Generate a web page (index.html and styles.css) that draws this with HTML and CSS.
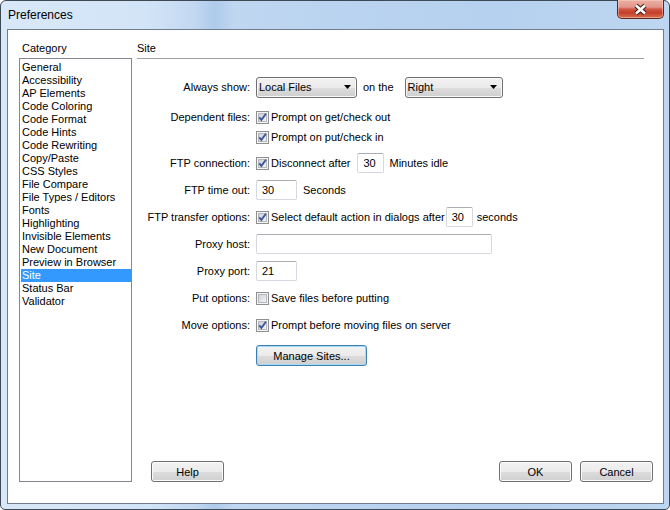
FILE: index.html
```html
<!DOCTYPE html>
<html>
<head>
<meta charset="utf-8">
<title>Preferences</title>
<link rel="stylesheet" href="styles.css">
</head>
<body>
<svg class="defs" width="0" height="0" aria-hidden="true">
  <defs>
    <linearGradient id="cbg" x1="0" y1="0" x2="1" y2="1">
      <stop offset="0" stop-color="#c9ced4"/>
      <stop offset="1" stop-color="#f7f7f7"/>
    </linearGradient>
  </defs>
</svg>
<div class="window">
  <div class="titlebar">
    <span class="title">Preferences</span>
    <div class="close">
      <svg width="45" height="17" viewBox="0 0 45 17">
        <path d="M18 4.5 L27 12.5 M27 4.5 L18 12.5" stroke="#3b1a14" stroke-width="4.6" fill="none"/>
        <path d="M18 4.5 L27 12.5 M27 4.5 L18 12.5" stroke="#ffffff" stroke-width="2.6" fill="none"/>
      </svg>
    </div>
  </div>
  <div class="client">
    <div class="main">
      <div class="cat-col">
        <div class="cat-head">Category</div>
        <ul class="cat-list">
          <li>General</li>
          <li>Accessibility</li>
          <li>AP Elements</li>
          <li>Code Coloring</li>
          <li>Code Format</li>
          <li>Code Hints</li>
          <li>Code Rewriting</li>
          <li>Copy/Paste</li>
          <li>CSS Styles</li>
          <li>File Compare</li>
          <li>File Types / Editors</li>
          <li>Fonts</li>
          <li>Highlighting</li>
          <li>Invisible Elements</li>
          <li>New Document</li>
          <li>Preview in Browser</li>
          <li class="sel">Site</li>
          <li>Status Bar</li>
          <li>Validator</li>
        </ul>
      </div>
      <div class="site-col">
        <div class="site-head">Site</div>
        <div class="form">
          <div class="row">
            <span class="lbl">Always show:</span>
            <div class="select w101"><span>Local Files</span><svg width="7" height="4" viewBox="0 0 7 4"><path d="M0 0H7L3.5 4Z" fill="#000"/></svg></div>
            <span class="txt on-the">on the</span>
            <div class="select w98"><span>Right</span><svg width="7" height="4" viewBox="0 0 7 4"><path d="M0 0H7L3.5 4Z" fill="#000"/></svg></div>
          </div>
          <div class="row m10">
            <span class="lbl">Dependent files:</span>
            <svg class="cb" width="13" height="13" viewBox="0 0 13 13"><rect x=".5" y=".5" width="12" height="12" fill="#f4f4f4" stroke="#8e8f8f"/><rect x="2.5" y="2.5" width="8" height="8" fill="url(#cbg)" stroke="#b4b8be"/><path d="M3.2 6.3 L5.4 8.9 L9.9 2.8" fill="none" stroke="#41579a" stroke-width="1.9"/></svg>
            <span class="txt cbt">Prompt on get/check out</span>
          </div>
          <div class="row">
            <span class="lbl"></span>
            <svg class="cb" width="13" height="13" viewBox="0 0 13 13"><rect x=".5" y=".5" width="12" height="12" fill="#f4f4f4" stroke="#8e8f8f"/><rect x="2.5" y="2.5" width="8" height="8" fill="url(#cbg)" stroke="#b4b8be"/><path d="M3.2 6.3 L5.4 8.9 L9.9 2.8" fill="none" stroke="#41579a" stroke-width="1.9"/></svg>
            <span class="txt cbt">Prompt on put/check in</span>
          </div>
          <div class="row m6">
            <span class="lbl">FTP connection:</span>
            <svg class="cb" width="13" height="13" viewBox="0 0 13 13"><rect x=".5" y=".5" width="12" height="12" fill="#f4f4f4" stroke="#8e8f8f"/><rect x="2.5" y="2.5" width="8" height="8" fill="url(#cbg)" stroke="#b4b8be"/><path d="M3.2 6.3 L5.4 8.9 L9.9 2.8" fill="none" stroke="#41579a" stroke-width="1.9"/></svg>
            <span class="txt cbt">Disconnect after</span>
            <div class="input w27 ml7">30</div>
            <span class="txt ml5">Minutes idle</span>
          </div>
          <div class="row m7">
            <span class="lbl">FTP time out:</span>
            <div class="input w41">30</div>
            <span class="txt ml6">Seconds</span>
          </div>
          <div class="row m7">
            <span class="lbl">FTP transfer options:</span>
            <svg class="cb" width="13" height="13" viewBox="0 0 13 13"><rect x=".5" y=".5" width="12" height="12" fill="#f4f4f4" stroke="#8e8f8f"/><rect x="2.5" y="2.5" width="8" height="8" fill="url(#cbg)" stroke="#b4b8be"/><path d="M3.2 6.3 L5.4 8.9 L9.9 2.8" fill="none" stroke="#41579a" stroke-width="1.9"/></svg>
            <span class="txt cbt">Select default action in dialogs after</span>
            <div class="input w27 ml1">30</div>
            <span class="txt ml4">seconds</span>
          </div>
          <div class="row m7">
            <span class="lbl">Proxy host:</span>
            <div class="input w236"></div>
          </div>
          <div class="row m7">
            <span class="lbl">Proxy port:</span>
            <div class="input w41">21</div>
          </div>
          <div class="row m7">
            <span class="lbl">Put options:</span>
            <svg class="cb" width="13" height="13" viewBox="0 0 13 13"><rect x=".5" y=".5" width="12" height="12" fill="#f4f4f4" stroke="#8e8f8f"/><rect x="2.5" y="2.5" width="8" height="8" fill="url(#cbg)" stroke="#b4b8be"/></svg>
            <span class="txt cbt">Save files before putting</span>
          </div>
          <div class="row m7">
            <span class="lbl">Move options:</span>
            <svg class="cb" width="13" height="13" viewBox="0 0 13 13"><rect x=".5" y=".5" width="12" height="12" fill="#f4f4f4" stroke="#8e8f8f"/><rect x="2.5" y="2.5" width="8" height="8" fill="url(#cbg)" stroke="#b4b8be"/><path d="M3.2 6.3 L5.4 8.9 L9.9 2.8" fill="none" stroke="#41579a" stroke-width="1.9"/></svg>
            <span class="txt cbt">Prompt before moving files on server</span>
          </div>
          <div class="row m10 btnrow">
            <span class="lbl"></span>
            <div class="btn focus w111">Manage Sites...</div>
          </div>
        </div>
        <div class="buttons">
          <div class="btn w73">Help</div>
          <div class="btn w73 push">OK</div>
          <div class="btn w73">Cancel</div>
        </div>
      </div>
    </div>
  </div>
</div>
</body>
</html>
```
FILE: styles.css
```css
html, body {
  margin: 0;
  padding: 0;
}
body {
  width: 670px;
  height: 510px;
  overflow: hidden;
  background: #ffffff;
  font-family: "Liberation Sans", Arial, sans-serif;
  font-size: 11px;
  color: #000;
}
.defs {
  position: absolute;
  width: 0;
  height: 0;
}
.window {
  box-sizing: border-box;
  width: 670px;
  height: 510px;
  border: 1px solid #3d4955;
  border-radius: 6px 6px 5px 5px;
  background: linear-gradient(90deg, #d8e8f8 0%, #d2e4f7 22%, #c2d8f1 29%, #aecbeb 32%, #c0d7f1 35%, #b9d3f0 50%, #b6d1ef 75%, #bdd6f1 100%);
  display: flex;
  flex-direction: column;
}
.titlebar {
  height: 28px;
  display: flex;
  align-items: center;
}
.title {
  padding-left: 7px;
  font-size: 12px;
  color: #000;
}
.close {
  margin-left: auto;
  margin-right: 5px;
  align-self: flex-start;
  margin-top: -1px;
  width: 47px;
  height: 19px;
  box-sizing: border-box;
  border: 1px solid #5a2a22;
  border-top: none;
  border-radius: 0 0 5px 5px;
  background: linear-gradient(180deg, #eab0a2 0%, #e2968a 40%, #d05a48 50%, #c43d28 70%, #d8704f 100%);
  box-shadow: inset 0 0 0 1px rgba(255, 220, 210, 0.45);
  display: flex;
  align-items: center;
  justify-content: center;
}
.close svg {
  display: block;
}
.client {
  flex: 1;
  margin: 0 5px 5px 6px;
  border: 1px solid #6f7d8f;
  background: #ffffff;
  padding: 12px 0 0 11px;
}
.main {
  display: flex;
  height: 440px;
}
.cat-col {
  width: 113px;
  display: flex;
  flex-direction: column;
}
.cat-head {
  line-height: 13px;
  height: 13px;
  padding-left: 3px;
  margin-bottom: 3px;
}
.cat-list {
  list-style: none;
  margin: 0;
  padding: 2px 0 0 0;
  box-sizing: border-box;
  height: 424px;
  border: 1px solid #828790;
}
.cat-list li {
  height: 13px;
  line-height: 13px;
  margin-left: 1px;
  padding-left: 1px;
  white-space: nowrap;
}
.cat-list li.sel {
  background: #3399ff;
  color: #ffffff;
}
.site-col {
  margin-left: 5px;
  width: 516px;
  display: flex;
  flex-direction: column;
}
.site-head {
  width: 507px;
  line-height: 13px;
  height: 13px;
  padding-bottom: 3px;
  border-bottom: 1px solid #a0a0a0;
}
.form {
  margin-top: 18px;
  display: flex;
  flex-direction: column;
}
.row {
  height: 20px;
  display: flex;
  align-items: center;
  white-space: nowrap;
}
.m10 { margin-top: 10px; }
.m6 { margin-top: 6px; }
.m7 { margin-top: 7px; }
.btnrow { height: 21px; }
.lbl {
  width: 113px;
  margin-right: 6px;
  text-align: right;
  flex: none;
}
.txt { flex: none; }
.cbt { margin-left: 2px; }
.on-the { margin-left: 6px; margin-right: 11px; }
.ml1 { margin-left: 1px; }
.ml4 { margin-left: 4px; }
.ml5 { margin-left: 5px; }
.ml6 { margin-left: 6px; }
.ml7 { margin-left: 7px; }
.cb {
  display: block;
  flex: none;
}
.select {
  box-sizing: border-box;
  height: 21px;
  border: 1px solid #707070;
  border-radius: 3px;
  background: linear-gradient(180deg, #f2f2f2 0%, #ebebeb 50%, #dddddd 51%, #cfcfcf 100%);
  box-shadow: inset 0 0 0 1px #f8f8f8;
  display: flex;
  align-items: center;
  justify-content: space-between;
  padding: 0 5px 0 2px;
  flex: none;
}
.select svg { display: block; }
.w101 { width: 101px; }
.w98 { width: 98px; }
.input {
  box-sizing: border-box;
  height: 20px;
  border: 1px solid #d5d9df;
  border-top-color: #abadb3;
  border-radius: 2px;
  background: #ffffff;
  padding-left: 5px;
  line-height: 18px;
  flex: none;
}
.w27 { width: 27px; }
.w41 { width: 41px; }
.w236 { width: 236px; }
.btn {
  box-sizing: border-box;
  height: 21px;
  border: 1px solid #707070;
  border-radius: 3px;
  background: linear-gradient(180deg, #f2f2f2 0%, #ebebeb 50%, #dddddd 51%, #cfcfcf 100%);
  box-shadow: inset 0 0 0 1px #fbfbfb;
  display: flex;
  align-items: center;
  justify-content: center;
  flex: none;
}
.btn.focus {
  border-color: #3c7fb1;
  box-shadow: inset 0 0 0 1px #a6dcf7;
}
.w111 { width: 111px; }
.w73 { width: 73px; }
.buttons {
  margin-top: auto;
  display: flex;
  gap: 8px;
  padding-left: 14px;
}
.push { margin-left: auto; }
```
